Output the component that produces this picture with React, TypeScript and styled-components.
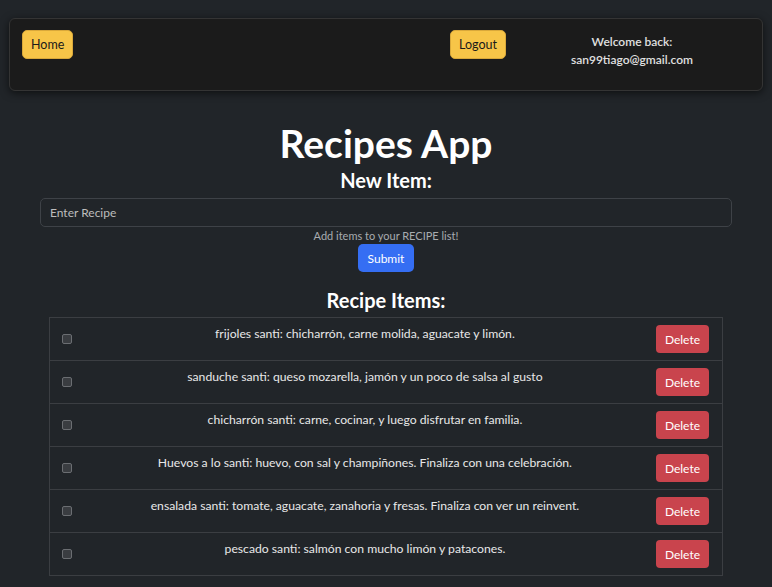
import React from "react";
import styled, { createGlobalStyle } from "styled-components";

const Global = createGlobalStyle`
  html, body { margin: 0; padding: 0; background: #212529; }
  body { font-family: Lato, "Noto Sans", sans-serif; color: #dee2e6; }
  * { box-sizing: border-box; }
`;

const Page = styled.div`
  min-height: 587px;
  padding: 18px 9px 0 9px;
  background: #212529;
`;

const Navbar = styled.nav`
  height: 73px;
  background: #1b1b1b;
  border: 1px solid #343434;
  border-radius: 6px;
  box-shadow: 0 2px 8px rgba(0, 0, 0, 0.6);
  display: grid;
  grid-template-columns: 1fr 1fr;
  padding: 11px 12px;
`;

const NavLeft = styled.div`
  display: flex;
  align-items: flex-start;
`;

const NavRight = styled.div`
  display: flex;
  align-items: flex-start;
  padding-left: 64px;
`;

const WarnButton = styled.button`
  background: #f7c548;
  border: 1px solid #d9a83a;
  border-radius: 5px;
  color: #1a1a1a;
  font-family: inherit;
  font-size: 12.5px;
  height: 29px;
  padding: 0 8px;
  cursor: pointer;
`;

const Welcome = styled.div`
  flex: 1;
  text-align: center;
  font-size: 12px;
  font-weight: 600;
  line-height: 18px;
  color: #e0e0e0;
  padding-top: 3px;
  padding-left: 8px;
`;

const Main = styled.main`
  display: flex;
  flex-direction: column;
  align-items: center;
  padding: 0 31px;
`;

const Title = styled.h1`
  margin: 28px 0 0;
  font-size: 39px;
  font-weight: 700;
  color: #fff;
  line-height: 48px;
`;

const SubTitle = styled.h2`
  margin: 0;
  font-size: 20px;
  font-weight: 700;
  color: #fff;
  line-height: 26px;
`;

const Input = styled.input`
  width: 100%;
  height: 29px;
  margin-top: 5px;
  background: #212529;
  border: 1px solid #3e4247;
  border-radius: 5px;
  color: #ddd;
  font-family: inherit;
  font-size: 12px;
  padding: 0 9px;
  &::placeholder { color: #bdbdbd; }
`;

const Hint = styled.div`
  font-size: 11px;
  color: #a8acb0;
  margin-top: 2px;
  line-height: 13px;
`;

const PrimaryButton = styled.button`
  background: #356ef3;
  border: none;
  border-radius: 5px;
  color: #fff;
  font-family: inherit;
  font-size: 12px;
  height: 28px;
  padding: 0 10px;
  margin-top: 2px;
`;

const ItemsTitle = styled(SubTitle)`
  margin-top: 15px;
  margin-bottom: 0;
`;

const List = styled.ul`
  list-style: none;
  margin: 4px 0 0;
  padding: 0;
  width: 674px;
  border: 1px solid #3b3e42;
  border-bottom: none;
`;

const Row = styled.li`
  height: 43px;
  border-bottom: 1px solid #3b3e42;
  display: flex;
  align-items: center;
  padding: 0 13px 0 12px;
`;

const Check = styled.span`
  width: 10px;
  height: 10px;
  border: 1px solid #6b6e72;
  background: #3a3d41;
  border-radius: 2px;
  flex: none;
`;

const ItemText = styled.div`
  flex: 1;
  text-align: center;
  font-size: 12.2px;
  color: #e8e8e8;
  padding-bottom: 11px;
  padding-left: 2px;
`;

const DangerButton = styled.button`
  background: #c9444d;
  border: none;
  border-radius: 4px;
  color: #fff;
  font-family: inherit;
  font-size: 12px;
  height: 28px;
  padding: 0 9px;
`;

const items = [
  "frijoles santi: chicharrón, carne molida, aguacate y limón.",
  "sanduche santi: queso mozarella, jamón y un poco de salsa al gusto",
  "chicharrón santi: carne, cocinar, y luego disfrutar en familia.",
  "Huevos a lo santi: huevo, con sal y champiñones. Finaliza con una celebración.",
  "ensalada santi: tomate, aguacate, zanahoria y fresas. Finaliza con ver un reinvent.",
  "pescado santi: salmón con mucho limón y patacones.",
];

export default function App() {
  return (
    <Page>
      <Global />
      <Navbar>
        <NavLeft>
          <WarnButton>Home</WarnButton>
        </NavLeft>
        <NavRight>
          <WarnButton>Logout</WarnButton>
          <Welcome>
            Welcome back:
            <br />
            san99tiago@gmail.com
          </Welcome>
        </NavRight>
      </Navbar>
      <Main>
        <Title>Recipes App</Title>
        <SubTitle>New Item:</SubTitle>
        <Input placeholder="Enter Recipe" />
        <Hint>Add items to your RECIPE list!</Hint>
        <PrimaryButton>Submit</PrimaryButton>
        <ItemsTitle>Recipe Items:</ItemsTitle>
        <List>
          {items.map((t) => (
            <Row key={t}>
              <Check />
              <ItemText>{t}</ItemText>
              <DangerButton>Delete</DangerButton>
            </Row>
          ))}
        </List>
      </Main>
    </Page>
  );
}
